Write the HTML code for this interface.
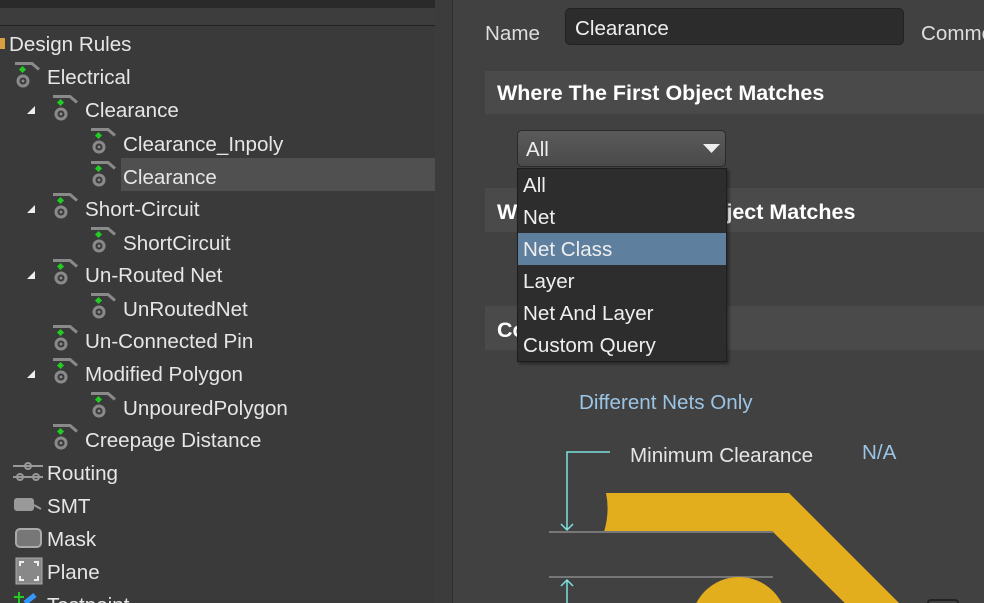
<!DOCTYPE html>
<html><head><style>
html,body{margin:0;width:984px;height:603px;overflow:hidden}
body{background:#3a3a3a;font-family:"Liberation Sans",sans-serif}
#w{position:relative;width:984px;height:603px;overflow:hidden}
.a{position:absolute}
.t{position:absolute;color:#e6e6e6;font-size:20.6px;line-height:33px;white-space:nowrap;margin-top:1px}
.hd{position:absolute;left:485px;width:499px;background:#4a4a4a;color:#fff;font-weight:bold;font-size:21.5px;box-sizing:border-box;padding-left:12px;overflow:hidden;white-space:nowrap}
.mi{height:32px;line-height:33px;padding-left:5px;color:#eee;font-size:20.6px}
</style></head><body><div id="w">
<div class="a" style="left:0;top:0;width:435px;height:8px;background:#2a2a2a"></div>
<div class="a" style="left:0;top:8px;width:435px;height:17px;background:#3d3d3d;border-bottom:1px solid #222"></div>
<div class="a" style="left:435px;top:0;width:17px;height:603px;background:#3c3c3c"></div>
<div class="a" style="left:452px;top:0;width:532px;height:603px;background:#414141;border-left:1px solid #2e2e2e;overflow:hidden">
<div class="t" style="left:468px;top:16px;color:#ddd">Comment</div>
</div>
<div class="a" style="left:121px;top:158px;width:314px;height:33px;background:#505050"></div>
<svg class="a" style="left:0;top:0" width="440" height="603">
<defs><g id="ic"><path d="M0 1.5h17l7 6" stroke="#8a8a8a" stroke-width="3" fill="none"/><rect x="5" y="5" width="5" height="5" fill="#2c2" transform="rotate(45 7.5 7.5)"/><circle cx="8" cy="19" r="5" stroke="#8a8a8a" stroke-width="3" fill="none"/><circle cx="8" cy="19" r="1.5" fill="#8a8a8a"/></g></defs>
<rect x="0" y="38" width="5" height="11" fill="#d8a040"/>
<use href="#ic" x="15" y="62"/><use href="#ic" x="53" y="95"/><use href="#ic" x="91" y="128"/><use href="#ic" x="91" y="161"/>
<use href="#ic" x="53" y="193"/><use href="#ic" x="91" y="227"/><use href="#ic" x="53" y="259"/><use href="#ic" x="91" y="293"/>
<use href="#ic" x="53" y="325"/><use href="#ic" x="53" y="358"/><use href="#ic" x="91" y="392"/><use href="#ic" x="53" y="424"/>
<g fill="#eee"><path d="M27 114l8-8v8z"/><path d="M27 213l8-8v8z"/><path d="M27 279l8-8v8z"/><path d="M27 378l8-8v8z"/></g>
<g stroke="#999" stroke-width="2" fill="none"><path d="M13 466h30M13 477h30"/><circle cx="28" cy="466" r="3"/><circle cx="20" cy="477" r="3"/><circle cx="36" cy="477" r="3"/></g>
<rect x="14" y="498" width="20" height="13" rx="3" fill="#999"/><path d="M34 505l7 4" stroke="#999" stroke-width="2"/>
<rect x="16" y="529" width="25" height="18" rx="4" fill="#777" stroke="#aaa" stroke-width="2"/>
<rect x="16" y="558" width="26" height="26" fill="#888" stroke="#aaa"/>
<g stroke="#eee" stroke-width="2" fill="none"><path d="M20 566v-4h4M38 566v-4h-4M20 576v4h4M38 576v4h-4"/></g>
<path d="M14 597h10M19 592v11" stroke="#2c2" stroke-width="2"/><path d="M25 603l10-8" stroke="#39f" stroke-width="5"/>
</svg>
<div class="t" style="left:9px;top:27px">Design Rules</div>
<div class="t" style="left:47px;top:60px">Electrical</div>
<div class="t" style="left:85px;top:93px">Clearance</div>
<div class="t" style="left:123px;top:127px">Clearance_Inpoly</div>
<div class="t" style="left:123px;top:160px">Clearance</div>
<div class="t" style="left:85px;top:192px">Short-Circuit</div>
<div class="t" style="left:123px;top:226px">ShortCircuit</div>
<div class="t" style="left:85px;top:258px">Un-Routed Net</div>
<div class="t" style="left:123px;top:292px">UnRoutedNet</div>
<div class="t" style="left:85px;top:324px">Un-Connected Pin</div>
<div class="t" style="left:85px;top:357px">Modified Polygon</div>
<div class="t" style="left:123px;top:391px">UnpouredPolygon</div>
<div class="t" style="left:85px;top:423px">Creepage Distance</div>
<div class="t" style="left:47px;top:456px">Routing</div>
<div class="t" style="left:47px;top:489px">SMT</div>
<div class="t" style="left:47px;top:522px">Mask</div>
<div class="t" style="left:47px;top:555px">Plane</div>
<div class="a" style="left:47px;top:588px;width:200px;height:15px;overflow:hidden"><div class="t" style="left:0;top:0">Testpoint</div></div>

<div class="t" style="left:485px;top:16px;color:#ddd">Name</div>
<div class="a" style="left:565px;top:8px;width:339px;height:37px;background:#2c2c2c;border:1px solid #222;border-radius:5px;box-sizing:border-box"></div>
<div class="t" style="left:575px;top:11px;color:#eee">Clearance</div>
<div class="hd" style="top:71px;height:43px;line-height:45px">Where The First Object Matches</div>
<div class="hd" style="top:188px;height:44px;line-height:48px">Where The Second Object Matches</div>
<div class="hd" style="top:306px;height:44px;line-height:48px">Constraints</div>
<div class="a" style="left:517px;top:130px;width:209px;height:37px;background:linear-gradient(#5a5a5a,#4a4a4a);border:1px solid #2a2a2a;border-radius:5px;box-sizing:border-box"></div>
<div class="t" style="left:526px;top:132px;color:#eee">All</div>
<svg class="a" style="left:703px;top:144px" width="18" height="10"><path d="M0 0h17l-8.5 9z" fill="#eee"/></svg>
<div class="a" style="left:517px;top:168px;width:210px;height:194px;background:#2d2d2d;border:1px solid #1e1e1e;box-sizing:border-box;box-shadow:2px 2px 3px rgba(0,0,0,.4)">
<div class="mi">All</div><div class="mi">Net</div><div class="mi" style="background:#5f7f9f">Net Class</div><div class="mi">Layer</div><div class="mi">Net And Layer</div><div class="mi">Custom Query</div>
</div>
<div class="t" style="left:579px;top:385px;color:#9cc4e4">Different Nets Only</div>
<div class="t" style="left:630px;top:438px;color:#e6e6e6">Minimum Clearance</div>
<div class="t" style="left:862px;top:435px;color:#9cc4e4">N/A</div>
<svg class="a" style="left:540px;top:440px" width="444" height="163">
<path d="M70 12H27v78M21 84l6 6 6-6" stroke="#7fe0e0" stroke-width="1.5" fill="none"/>
<path d="M27 163V140M21 146l6-6 6 6" stroke="#7fe0e0" stroke-width="1.5" fill="none"/>
<path d="M66 53H249L384 188H330L233 92H64q6-20 2-39z" fill="#e2ae1e"/>
<path d="M9 92H233M9 137H233" stroke="#777" stroke-width="2"/>
<circle cx="199" cy="185" r="48" fill="#e2ae1e"/>
<rect x="388" y="160" width="30" height="10" rx="3" fill="none" stroke="#222" stroke-width="2"/>
</svg>
</div></body></html>
